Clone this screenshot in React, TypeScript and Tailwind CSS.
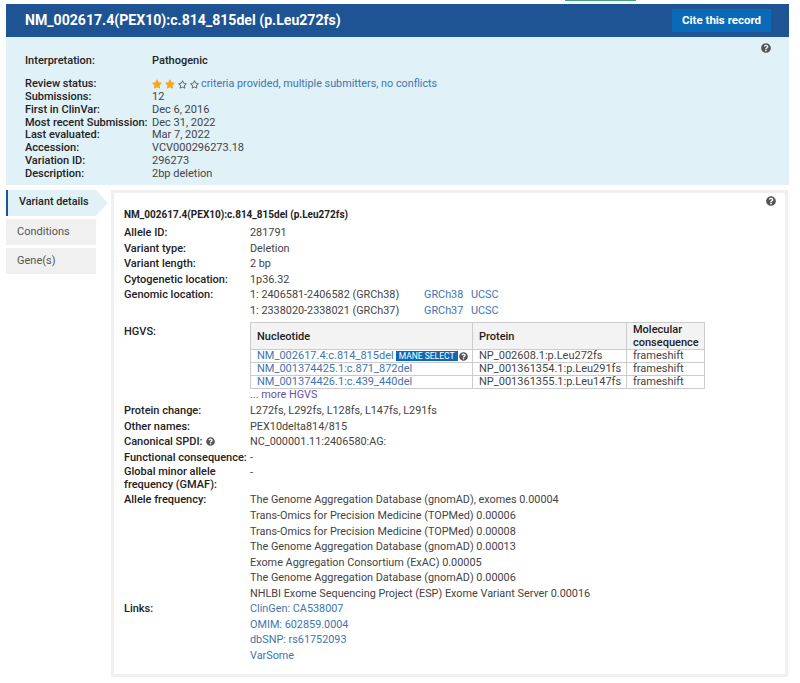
import { FaQuestionCircle, FaRegStar, FaStar } from 'react-icons/fa'

const summaryRows = [
  ['Submissions:', '12'],
  ['First in ClinVar:', 'Dec 6, 2016'],
  ['Most recent Submission:', 'Dec 31, 2022'],
  ['Last evaluated:', 'Mar 7, 2022'],
  ['Accession:', 'VCV000296273.18'],
  ['Variation ID:', '296273'],
  ['Description:', '2bp deletion'],
]

const hgvsRows = [
  ['NM_001374425.1:c.871_872del', 'NP_001361354.1:p.Leu291fs'],
  ['NM_001374426.1:c.439_440del', 'NP_001361355.1:p.Leu147fs'],
]

const frequencies = [
  'The Genome Aggregation Database (gnomAD), exomes 0.00004',
  'Trans-Omics for Precision Medicine (TOPMed) 0.00006',
  'Trans-Omics for Precision Medicine (TOPMed) 0.00008',
  'The Genome Aggregation Database (gnomAD) 0.00013',
  'Exome Aggregation Consortium (ExAC) 0.00005',
  'The Genome Aggregation Database (gnomAD) 0.00006',
  'NHLBI Exome Sequencing Project (ESP) Exome Variant Server 0.00016',
]

function DetailRow({ label, children }: { label: React.ReactNode; children: React.ReactNode }) {
  return (
    <div className="flex">
      <div className="w-[126px] shrink-0 font-medium text-[#222]">{label}</div>
      <div className="min-w-0 flex-1 text-[10.85px]">{children}</div>
    </div>
  )
}

export default function App() {
  return (
    <div className="h-[683px] w-[800px] overflow-hidden bg-white font-['Roboto',sans-serif] text-[11px] text-[#444]">
      <div className="ml-[565px] h-px w-[71px] bg-[#3fa37c]" />

      {/* Title bar */}
      <div className="mx-[6px] mt-[3px] w-[783px]">
        <div className="flex h-[33px] items-center justify-between bg-[#1f5494] pl-[19px] pr-[18px]">
          <h1 className="text-[14.1px] font-bold text-white">NM_002617.4(PEX10):c.814_815del (p.Leu272fs)</h1>
          <button className="h-[23px] w-[99px] bg-[#0a6ab8] text-[11.5px] font-bold text-white">Cite this record</button>
        </div>

        {/* Summary */}
        <div className="relative h-[148px] bg-[#e0f1f8] pl-[19px] pt-[18px] text-[11px] leading-[12.85px]">
          <FaQuestionCircle className="absolute right-[18px] top-[6px] text-[10px] text-[#555]" />
          <div className="flex h-[23px]">
            <div className="w-[127px] font-medium text-[#222]">Interpretation:</div>
            <div className="font-medium text-[#222]">Pathogenic</div>
          </div>
          <div className="flex">
            <div className="w-[127px] font-medium text-[#222]">Review status:</div>
            <div className="flex items-center">
              <FaStar className="mr-[3px] text-[10px] text-[#f5a623]" />
              <FaStar className="mr-[3px] text-[10px] text-[#f5a623]" />
              <FaRegStar className="mr-[3px] text-[9px] text-[#555]" />
              <FaRegStar className="mr-[2px] text-[9px] text-[#555]" />
              <a className="text-[10.8px] text-[#3f75ad]">criteria provided, multiple submitters, no conflicts</a>
            </div>
          </div>
          {summaryRows.map(([label, value]) => (
            <div key={label} className="flex">
              <div className="w-[127px] font-medium text-[#222]">{label}</div>
              <div>{value}</div>
            </div>
          ))}
        </div>
      </div>

      <div className="ml-[6px] mt-[5px] flex w-[783px] gap-[3px]">
        {/* Side tabs */}
        <div className="flex w-[102px] shrink-0 flex-col gap-[3px]">
          <div className="flex h-[26px] items-center border-l-2 border-[#1f5494] bg-[#e0f1f8] pb-px pl-[11px] text-[10.8px] font-medium text-[#222] [clip-path:polygon(0_0,90px_0,102px_50%,90px_100%,0_100%)]">
            Variant details
          </div>
          <div className="flex h-[26px] w-[90px] items-center bg-[#f0f0f0] pl-[11px] text-[#555]">Conditions</div>
          <div className="flex h-[26px] w-[90px] items-center bg-[#f0f0f0] pl-[11px] text-[#555]">Gene(s)</div>
        </div>

        {/* Variant details card */}
        <div className="relative h-[487px] w-[677px] border-[3px] border-[#f0f0f0] pl-[10px] pt-[14px] text-[11px] leading-[15.55px]">
          <FaQuestionCircle className="absolute right-[9px] top-[3px] text-[10px] text-[#555]" />
          <h2 className="mb-[3px] text-[10px] font-bold leading-[15px] text-[#222]">NM_002617.4(PEX10):c.814_815del (p.Leu272fs)</h2>
          <DetailRow label="Allele ID:">281791</DetailRow>
          <DetailRow label="Variant type:">Deletion</DetailRow>
          <DetailRow label="Variant length:">2 bp</DetailRow>
          <DetailRow label="Cytogenetic location:">1p36.32</DetailRow>
          <DetailRow label="Genomic location:">
            <div className="flex">
              <span className="w-[174px]">1: 2406581-2406582 (GRCh38)</span>
              <a className="w-[47px] text-[#3f75ad]">GRCh38</a>
              <a className="text-[#3f75ad]">UCSC</a>
            </div>
            <div className="flex">
              <span className="w-[174px]">1: 2338020-2338021 (GRCh37)</span>
              <a className="w-[47px] text-[#3f75ad]">GRCh37</a>
              <a className="text-[#3f75ad]">UCSC</a>
            </div>
          </DetailRow>
          <DetailRow label={<span className="mt-[6px] block">HGVS:</span>}>
            <table className="mt-[4px] w-[455px] table-fixed border-collapse border border-[#ccc] text-[11px] leading-[12px]">
              <thead>
                <tr className="bg-[#f3f3f3] font-medium leading-[13px] text-[#222]">
                  <th className="w-[222px] border border-[#ccc] px-[6px] text-left font-medium">Nucleotide</th>
                  <th className="w-[154px] border border-[#ccc] px-[6px] text-left font-medium">Protein</th>
                  <th className="border border-[#ccc] px-[6px] text-left font-medium">Molecular consequence</th>
                </tr>
              </thead>
              <tbody>
                <tr>
                  <td className="whitespace-nowrap border border-[#ccc] px-[6px]">
                    <span className="inline-flex items-center">
                      <a className="text-[#3f75ad]">NM_002617.4:c.814_815del</a>
                      <span className="ml-[2px] bg-[#0a6ab8] px-[3px] text-[8.5px] leading-[10px] text-white">MANE SELECT</span>
                      <FaQuestionCircle className="ml-px text-[9px] text-[#555]" />
                    </span>
                  </td>
                  <td className="whitespace-nowrap border border-[#ccc] px-[6px]">NP_002608.1:p.Leu272fs</td>
                  <td className="border border-[#ccc] px-[6px]">frameshift</td>
                </tr>
                {hgvsRows.map(([nucleotide, protein]) => (
                  <tr key={nucleotide}>
                    <td className="whitespace-nowrap border border-[#ccc] px-[6px] text-[#3f75ad]">{nucleotide}</td>
                    <td className="whitespace-nowrap border border-[#ccc] px-[6px]">{protein}</td>
                    <td className="border border-[#ccc] px-[6px]">frameshift</td>
                  </tr>
                ))}
              </tbody>
            </table>
            <a className="block pb-[2px] leading-[12px] text-[#6a4fa3]">... more HGVS</a>
          </DetailRow>
          <DetailRow label="Protein change:">L272fs, L292fs, L128fs, L147fs, L291fs</DetailRow>
          <DetailRow label="Other names:">PEX10delta814/815</DetailRow>
          <DetailRow
            label={
              <span className="flex items-center gap-[3px]">
                Canonical SPDI: <FaQuestionCircle className="-translate-y-px text-[9px] text-[#555]" />
              </span>
            }
          >
            NC_000001.11:2406580:AG:
          </DetailRow>
          <DetailRow label="Functional consequence:">-</DetailRow>
          <DetailRow label={<span className="block w-[120px] leading-[13px]">Global minor allele frequency (GMAF):</span>}>-</DetailRow>
          <div className="mt-[1px]">
            <DetailRow label="Allele frequency:">
              {frequencies.map((line, index) => (
                <div key={index}>{line}</div>
              ))}
            </DetailRow>
          </div>
          <DetailRow label="Links:">
            <a className="block text-[#3f75ad]">ClinGen: CA538007</a>
            <a className="block text-[#3f75ad]">OMIM: 602859.0004</a>
            <a className="block text-[#3f75ad]">dbSNP: rs61752093</a>
            <a className="block text-[#3f75ad]">VarSome</a>
          </DetailRow>
        </div>
      </div>
    </div>
  )
}
